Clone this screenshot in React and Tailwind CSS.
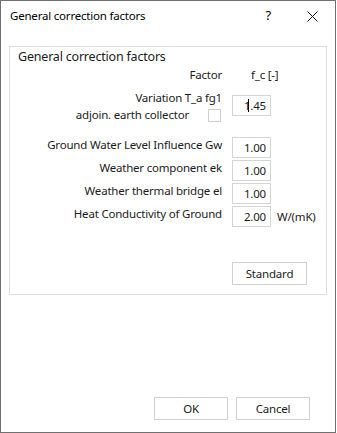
import React from "react";

const font = { fontFamily: '"Noto Sans", "Open Sans", sans-serif' };

function Field({ value, caret }) {
  return (
    <div className="w-[39px] h-[21px] border border-[#d4d4d4] bg-white flex items-center justify-end pr-[4px] text-[11.5px] leading-[16px] text-[#1b1b1b]">
      {caret && <span className="inline-block w-px h-[13px] bg-black -mr-[5px] mb-[1px]"></span>}
      <span>{value}</span>
    </div>
  );
}

function Row({ label, value, unit }) {
  return (
    <div className="flex items-start h-[23px]">
      <div className="w-[212px] text-right leading-[16px] whitespace-nowrap">{label}</div>
      <div className="ml-[10px]">
        <Field value={value} />
      </div>
      {unit && <div className="ml-[6px] mt-[3px] leading-[16px]">{unit}</div>}
    </div>
  );
}

function Btn({ children, className = "" }) {
  return (
    <button className={`h-[23px] border border-[#d0d0d0] bg-white text-[11.5px] text-[#1b1b1b] flex items-center justify-center ${className}`}>
      {children}
    </button>
  );
}

export default function App() {
  return (
    <div style={font} className="w-[336px] h-[433px] bg-white border border-[#707070] flex flex-col text-[11.5px] tracking-[-0.2px] text-[#1b1b1b]">
      {/* title bar */}
      <div className="h-[30px] flex items-center pl-[9px] pr-[17px]">
        <span className="text-black text-[11.5px] whitespace-nowrap">General correction factors</span>
        <span className="ml-auto text-black text-[13px]">?</span>
        <svg className="ml-[36px]" width="11" height="11" viewBox="0 0 11 11">
          <path d="M0.5 0.5 L10.5 10.5 M10.5 0.5 L0.5 10.5" stroke="#111" strokeWidth="1" />
        </svg>
      </div>

      <div className="pt-[15px] px-[8px]">
        <div className="h-[249px] border border-[#dcdcdc] flex flex-col">
          <div className="pl-[8px] pt-[2px] text-[12.5px] leading-[16px]">General correction factors</div>

          <div className="flex h-[16px] mt-[2px] leading-[16px]">
            <div className="w-[212px] text-right">Factor</div>
            <div className="ml-[29px]">f_c [-]</div>
          </div>

          {/* Variation row */}
          <div className="flex items-start mt-[7px]">
            <div className="w-[212px] flex flex-col items-end">
              <div className="leading-[16px] whitespace-nowrap">Variation T_a fg1</div>
              <div className="flex items-center h-[16px] mt-[1px]">
                <span className="leading-[16px] whitespace-nowrap">adjoin. earth collector</span>
                <span className="ml-[19px] mr-[1px] w-[13px] h-[13px] border border-[#cfcfcf] bg-white"></span>
              </div>
            </div>
            <div className="ml-[10px] mt-[5px]">
              <Field value="1.45" caret />
            </div>
          </div>

          <div className="mt-[14px]">
            <Row label="Ground Water Level Influence Gw" value="1.00" />
            <Row label="Weather component ek" value="1.00" />
            <Row label="Weather thermal bridge el" value="1.00" />
            <Row label="Heat Conductivity of Ground" value="2.00" unit="W/(mK)" />
          </div>

          <div className="mt-[33px] ml-[222px]">
            <Btn className="w-[75px]">Standard</Btn>
          </div>
        </div>
      </div>

      <div className="mt-auto flex justify-end gap-[8px] pr-[25px] pb-[12px]">
        <Btn className="w-[74px]">OK</Btn>
        <Btn className="w-[74px]">Cancel</Btn>
      </div>
    </div>
  );
}
